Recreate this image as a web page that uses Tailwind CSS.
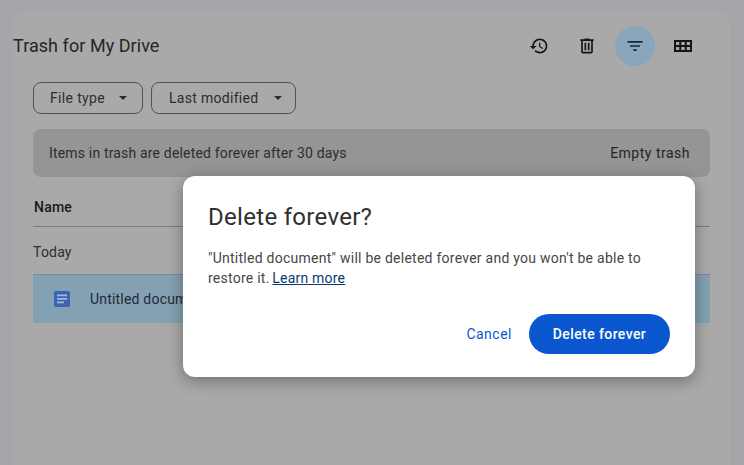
<!DOCTYPE html>
<html lang="en">
  <head>
    <meta charset="UTF-8" />
    <title>Trash for My Drive</title>
    <script src="https://cdn.jsdelivr.net/npm/@tailwindcss/browser@4"></script>
  </head>
  <body class="relative h-[465px] overflow-hidden bg-[#a4a6a9] font-['Roboto',sans-serif]">
    <main class="ml-[13px] mr-[14px] mt-[10px] h-[455px] rounded-t-[16px] bg-[#a9a9a9]">
      <header class="flex h-[72px] items-center justify-between pr-[27px]">
        <h1 class="pb-0.5 text-[18px] tracking-[0.05px] text-[#24262a]">Trash for My Drive</h1>
        <div class="flex gap-2 text-[#141517]">
          <button class="flex h-10 w-10 items-center justify-center rounded-full">
            <svg class="h-5 w-5" viewBox="0 0 24 24" fill="currentColor"><path d="M13 3c-4.97 0-9 4.03-9 9H1l3.89 3.89.07.14L9 12H6c0-3.87 3.13-7 7-7s7 3.13 7 7-3.13 7-7 7c-1.93 0-3.68-.79-4.94-2.06l-1.42 1.42C8.27 19.99 10.51 21 13 21c4.97 0 9-4.03 9-9s-4.03-9-9-9zm-1 5v5l4.28 2.54.72-1.21-3.5-2.08V8H12z"/></svg>
          </button>
          <button class="flex h-10 w-10 items-center justify-center rounded-full">
            <svg class="h-5 w-5" viewBox="0 0 24 24" fill="currentColor"><path d="M15 4V3H9v1H4v2h1v13c0 1.1.9 2 2 2h10c1.1 0 2-.9 2-2V6h1V4h-5zm2 15H7V6h10v13zM9 8h2v9H9zm4 0h2v9h-2z"/></svg>
          </button>
          <button class="flex h-10 w-10 items-center justify-center rounded-full bg-[#89a6ba] text-[#0d2a40]">
            <svg class="h-5 w-5" viewBox="0 0 24 24" fill="currentColor"><path d="M10 18h4v-2h-4v2zM3 6v2h18V6H3zm3 7h12v-2H6v2z"/></svg>
          </button>
          <button class="flex h-10 w-10 items-center justify-center rounded-full">
            <svg class="h-6 w-6" viewBox="0 0 24 24" fill="none" stroke="currentColor" stroke-width="2"><path d="M4 7h16v10H4zM4 12h16M9.3 7v10M14.7 7v10"/></svg>
          </button>
        </div>
      </header>

      <section class="ml-5 mr-5">
        <div class="flex gap-2">
          <button class="flex h-8 w-[110px] items-center rounded-[8px] border border-[#515254] pl-4 text-[14px] tracking-[0.35px] text-[#2c2d2f]">
            File type
            <span class="ml-[14px] h-0 w-0 border-x-[4px] border-t-[4px] border-x-transparent border-t-[#2c2d2f]"></span>
          </button>
          <button class="flex h-8 w-[145px] items-center rounded-[8px] border border-[#515254] pl-[17px] text-[14px] tracking-[0.3px] text-[#2c2d2f]">
            Last modified
            <span class="ml-[15px] h-0 w-0 border-x-[4px] border-t-[4px] border-x-transparent border-t-[#2c2d2f]"></span>
          </button>
        </div>

        <div class="mt-[15px] flex h-12 w-[677px] items-center justify-between rounded-[8px] bg-[#959596] pl-4 pr-5 text-[14px] tracking-[0.17px] text-[#2c2d2f]">
          <span>Items in trash are deleted forever after 30 days</span>
          <span class="tracking-[0.5px] text-[#232426]">Empty trash</span>
        </div>

        <div class="mt-[11px] flex h-[39px] w-[677px] items-center border-b border-[#7d7d7d] pl-px text-[14px] font-medium tracking-[0.2px] text-[#131a22]">Name</div>

        <div class="flex h-[47px] w-[677px] items-center pt-[3px] text-[14px] tracking-[0.2px] text-[#2e2f31]">Today</div>

        <div class="flex h-[49px] w-[677px] items-center border-t border-[#7e8a93] bg-[#84a1b3] pl-[21px] text-[14px] tracking-[0.2px] text-[#1c2a36]">
          <svg class="h-4 w-4 shrink-0" viewBox="0 0 16 16"><rect width="16" height="16" rx="2" fill="#3a64b4"/><path d="M3 3.5h10v1.8H3zM3 7h10v1.8H3zM3 10.5h7v1.8H3z" fill="#a5b8d9"/></svg>
          <span class="ml-5">Untitled document</span>
        </div>
      </section>
    </main>

    <div class="absolute left-[183px] top-[176px] h-[201px] w-[512px] rounded-[12px] bg-white pl-[25px] pr-[25px] pt-[27px] shadow-[0_4px_16px_rgba(0,0,0,0.35)]">
      <h2 class="text-[24px] font-[380] leading-7 tracking-[0.3px] text-[#2f2f2f]">Delete forever?</h2>
      <p class="mt-[17px] text-[14px] leading-5 tracking-[0.25px] text-[#444746]">"Untitled document" will be deleted forever and you won't be able to <br />restore it. <a class="-ml-px tracking-[0.2px] text-[#0b3a74] underline">Learn more</a></p>
      <div class="mt-[26px] flex items-center justify-end">
        <button class="mr-[17px] text-[14px] font-[450] tracking-[0.5px] text-[#0b57d0]">Cancel</button>
        <button class="h-10 w-[141px] rounded-full bg-[#0b57d0] text-[14px] font-medium tracking-[0.4px] text-white">Delete forever</button>
      </div>
    </div>
  </body>
</html>
